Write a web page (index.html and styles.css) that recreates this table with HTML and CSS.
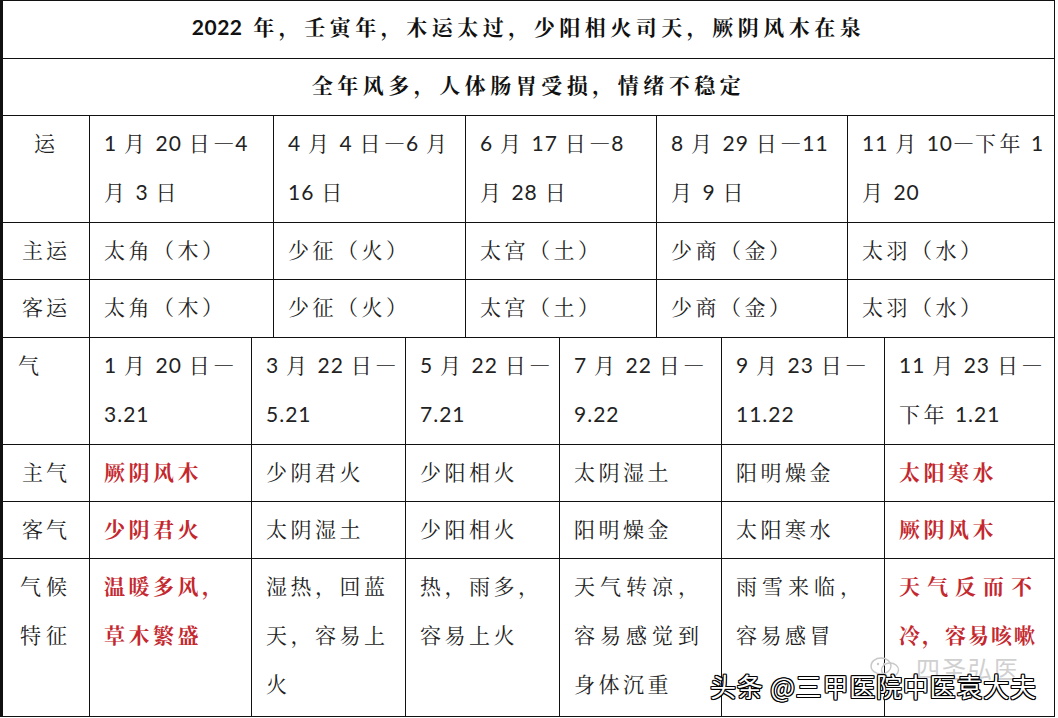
FILE: index.html
```html
<!DOCTYPE html>
<html lang="zh-CN">
<head>
<meta charset="utf-8">
<title>2022 年运气表</title>
<link rel="stylesheet" href="styles.css">
</head>
<body>
<div class="sheet">
  <div class="table">
    <div class="title title-1"><span class="n">2022</span> 年，壬寅年，木运太过，少阳相火司天，厥阴风木在泉</div>
    <div class="title title-2">全年风多，人体肠胃受损，情绪不稳定</div>

    <div class="grid grid-yun">
      <div class="cell head center">运</div>
      <div class="cell"><span class="n">1</span> 月 <span class="n">20</span> 日<span class="d">—</span><span class="n">4</span><br>月 <span class="n">3</span> 日</div>
      <div class="cell"><span class="n">4</span> 月 <span class="n">4</span> 日<span class="d">—</span><span class="n">6</span> 月<br><span class="n">16</span> 日</div>
      <div class="cell"><span class="n">6</span> 月 <span class="n">17</span> 日<span class="d">—</span><span class="n">8</span><br>月 <span class="n">28</span> 日</div>
      <div class="cell"><span class="n">8</span> 月 <span class="n">29</span> 日<span class="d">—</span><span class="n">11</span><br>月 <span class="n">9</span> 日</div>
      <div class="cell"><span class="n">11</span> 月 <span class="n">10</span><span class="d">—</span>下年 <span class="n">1</span><br>月 <span class="n">20</span></div>

      <div class="cell head center">主运</div>
      <div class="cell">太角（木）</div>
      <div class="cell">少征（火）</div>
      <div class="cell">太宫（土）</div>
      <div class="cell">少商（金）</div>
      <div class="cell">太羽（水）</div>

      <div class="cell head center">客运</div>
      <div class="cell">太角（木）</div>
      <div class="cell">少征（火）</div>
      <div class="cell">太宫（土）</div>
      <div class="cell">少商（金）</div>
      <div class="cell">太羽（水）</div>
    </div>

    <div class="grid grid-qi">
      <div class="cell head left">气</div>
      <div class="cell"><span class="n">1</span> 月 <span class="n">20</span> 日<span class="d">—</span><br><span class="n">3.21</span></div>
      <div class="cell"><span class="n">3</span> 月 <span class="n">22</span> 日<span class="d">—</span><br><span class="n">5.21</span></div>
      <div class="cell"><span class="n">5</span> 月 <span class="n">22</span> 日<span class="d">—</span><br><span class="n">7.21</span></div>
      <div class="cell"><span class="n">7</span> 月 <span class="n">22</span> 日<span class="d">—</span><br><span class="n">9.22</span></div>
      <div class="cell"><span class="n">9</span> 月 <span class="n">23</span> 日<span class="d">—</span><br><span class="n">11.22</span></div>
      <div class="cell"><span class="n">11</span> 月 <span class="n">23</span> 日<span class="d">—</span><br>下年 <span class="n">1.21</span></div>

      <div class="cell head center">主气</div>
      <div class="cell red">厥阴风木</div>
      <div class="cell">少阴君火</div>
      <div class="cell">少阳相火</div>
      <div class="cell">太阴湿土</div>
      <div class="cell">阳明燥金</div>
      <div class="cell red">太阳寒水</div>

      <div class="cell head center">客气</div>
      <div class="cell red">少阴君火</div>
      <div class="cell">太阴湿土</div>
      <div class="cell">少阳相火</div>
      <div class="cell">阳明燥金</div>
      <div class="cell">太阳寒水</div>
      <div class="cell red">厥阴风木</div>

      <div class="cell head left spread">气候<br>特征</div>
      <div class="cell red">温暖多风，<br>草木繁盛</div>
      <div class="cell">湿热，回蓝<br>天，容易上<br>火</div>
      <div class="cell">热，雨多，<br>容易上火</div>
      <div class="cell"><span class="wide">天气转凉，</span><br><span class="wide">容易感觉到</span><br>身体沉重</div>
      <div class="cell"><span class="wide">雨雪来临，</span><br>容易感冒</div>
      <div class="cell red"><span class="wider">天气反而不</span><br><span class="tight">冷，容易咳嗽</span></div>
    </div>
  </div>

  <div class="wm-faint">
    <svg class="wm-logo" width="30" height="22" viewBox="0 0 30 22" aria-hidden="true">
      <ellipse cx="11" cy="9" rx="10" ry="8" fill="none" stroke="#c8c8c8" stroke-width="1.4"/>
      <ellipse cx="20" cy="13" rx="8.5" ry="7" fill="none" stroke="#c8c8c8" stroke-width="1.4"/>
      <circle cx="8" cy="7" r="1.2" fill="#c8c8c8"/>
      <circle cx="14" cy="7" r="1.2" fill="#c8c8c8"/>
    </svg>
    <span class="wm-faint-text">四圣弘医</span>
  </div>
  <div class="wm">头条 @三甲医院中医袁大夫</div>
</div>
</body>
</html>
```

FILE: styles.css
```css
* {
  box-sizing: border-box;
}

html, body {
  margin: 0;
  padding: 0;
  background: #ffffff;
}

body {
  font-family: "Lato", "Noto Serif CJK SC", "Noto Sans CJK SC", sans-serif;
  color: #1e1e1e;
}

.sheet {
  position: relative;
  width: 1058px;
  height: 718px;
  overflow: hidden;
}

.table {
  width: 1055px;
  background: #111111;
  padding: 1px 1px 1px 3px;
  display: flex;
  flex-direction: column;
  gap: 1px;
}

.title {
  background: #ffffff;
  display: flex;
  align-items: center;
  justify-content: center;
  padding-bottom: 7px;
  font-size: 21px;
  font-weight: 700;
  letter-spacing: 4.5px;
  color: #111111;
  white-space: pre;
}

.title .n {
  letter-spacing: 0.5px;
  margin-right: 1px;
}

.title-1 {
  height: 57px;
}

.title-2 {
  height: 56px;
}

.grid {
  display: grid;
  gap: 1px;
}

.grid-yun {
  grid-template-columns: 86px 183px 191px 190px 190px 206px;
  grid-template-rows: 106px 56px 57px;
}

.grid-qi {
  grid-template-columns: 86px 161px 153px 153px 161px 162px 169px;
  grid-template-rows: 106px 56px 56px 157px;
}

.cell {
  background: #ffffff;
  font-size: 21px;
  letter-spacing: 3.5px;
  word-spacing: -2px;
  line-height: 49px;
  padding: 2px 0 0 14px;
  white-space: nowrap;
  color: #222222;
}

.n {
  letter-spacing: 1px;
}

.d {
  font-family: "Noto Serif CJK SC", "Noto Sans CJK SC", serif;
  letter-spacing: 0;
  margin-right: 1px;
}

.head {
  padding-left: 0;
}

.center {
  text-align: center;
  padding-right: 0;
  letter-spacing: 3px;
}

.left {
  padding-left: 15px;
}

.spread {
  padding-left: 17px;
  letter-spacing: 5px;
}

.red {
  color: #c4282e;
  font-weight: 700;
}

.wide {
  letter-spacing: 5px;
}

.wider {
  letter-spacing: 7px;
}

.tight {
  letter-spacing: 2px;
}

.wm {
  position: absolute;
  left: 710px;
  top: 668px;
  font-family: "Noto Sans CJK SC", sans-serif;
  font-size: 26px;
  line-height: 36px;
  letter-spacing: 0.8px;
  color: #ffffff;
  white-space: nowrap;
  text-shadow:
    1px 0 0 #000, -1px 0 0 #000, 0 1px 0 #000, 0 -1px 0 #000,
    1px 1px 0 #000, -1px -1px 0 #000, 1px -1px 0 #000, -1px 1px 0 #000;
}

.wm-faint {
  position: absolute;
  left: 870px;
  top: 650px;
  display: flex;
  align-items: center;
  gap: 16px;
}

.wm-faint-text {
  font-family: "Noto Sans CJK SC", sans-serif;
  font-size: 24px;
  color: #d0d0d0;
  letter-spacing: 2px;
}
```
